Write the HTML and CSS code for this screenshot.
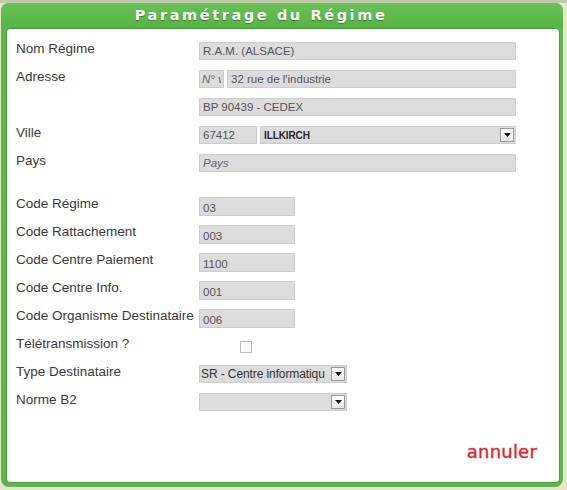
FILE: index.html
```html
<!DOCTYPE html>
<html lang="fr">

<head>
  <meta charset="utf-8" />
  <title>Paramétrage du Régime</title>
  <link rel="stylesheet" href="styles.css">
</head>

<body>
  <div class="dialog">
    <div class="dialog-title">Paramétrage du Régime</div>
    <div class="dialog-body">
      <form class="form">
        <div class="group">
          <div class="row">
            <label for="nom">Nom Régime</label>
            <input type="text" id="nom" class="field wide" value="R.A.M. (ALSACE)" readonly />
          </div>
          <div class="row">
            <label for="num">Adresse</label>
            <div class="pair">
              <input type="text" id="num" class="field num" placeholder="N° v" readonly />
              <input type="text" class="field street" value="32 rue de l'industrie" readonly />
            </div>
          </div>
          <div class="row">
            <label></label>
            <input type="text" class="field wide" value="BP 90439 - CEDEX" readonly />
          </div>
          <div class="row">
            <label for="cp">Ville</label>
            <div class="pair">
              <input type="text" id="cp" class="field cp" value="67412" readonly />
              <div class="select city">
                <span class="select-text strong">ILLKIRCH</span>
                <span class="select-btn"><svg width="7" height="4" viewBox="0 0 7 4"><path d="M0 0h7L3.5 4z" fill="#111" /></svg></span>
              </div>
            </div>
          </div>
          <div class="row">
            <label for="pays">Pays</label>
            <input type="text" id="pays" class="field wide" placeholder="Pays" readonly />
          </div>
        </div>

        <div class="group codes">
          <div class="row">
            <label for="c1">Code Régime</label>
            <input type="text" id="c1" class="field code" value="03" readonly />
          </div>
          <div class="row">
            <label for="c2">Code Rattachement</label>
            <input type="text" id="c2" class="field code" value="003" readonly />
          </div>
          <div class="row">
            <label for="c3">Code Centre Paiement</label>
            <input type="text" id="c3" class="field code" value="1100" readonly />
          </div>
          <div class="row">
            <label for="c4">Code Centre Info.</label>
            <input type="text" id="c4" class="field code" value="001" readonly />
          </div>
          <div class="row">
            <label for="c5">Code Organisme Destinataire</label>
            <input type="text" id="c5" class="field code" value="006" readonly />
          </div>
          <div class="row">
            <label for="tele">Télétransmission ?</label>
            <span class="check" id="tele"></span>
          </div>
          <div class="row">
            <label>Type Destinataire</label>
            <div class="select small">
              <span class="select-text">SR - Centre informatiqu</span>
              <span class="select-btn"><svg width="7" height="4" viewBox="0 0 7 4"><path d="M0 0h7L3.5 4z" fill="#111" /></svg></span>
            </div>
          </div>
          <div class="row">
            <label>Norme B2</label>
            <div class="select small">
              <span class="select-text"></span>
              <span class="select-btn"><svg width="7" height="4" viewBox="0 0 7 4"><path d="M0 0h7L3.5 4z" fill="#111" /></svg></span>
            </div>
          </div>
        </div>
      </form>

      <div class="actions">
        <a class="cancel" href="#">annuler</a>
      </div>
    </div>
  </div>
</body>

</html>
```

FILE: styles.css
```css
body {
  margin: 0;
  font-family: "Liberation Sans", Arial, sans-serif;
  background: linear-gradient(#bfcaa8 0, #bfcaa8 3px, #ece3cf 3px);
  height: 490px;
  overflow: hidden;
}

.dialog {
  width: 562px;
  height: 484px;
  margin: 3px 0 0 1px;
  box-sizing: border-box;
  padding: 0 3px 4px 5px;
  background: #5cb849;
  border-radius: 8px;
  display: flex;
  flex-direction: column;
}

.dialog-title {
  height: 25px;
  line-height: 25px;
  padding-right: 42px;
  text-align: center;
  font-family: "DejaVu Sans", Verdana, sans-serif;
  font-weight: bold;
  font-size: 14.5px;
  letter-spacing: 2.6px;
  color: #fff;
  text-shadow: 0 1px 1px rgba(0, 0, 0, 0.35);
  background: linear-gradient(#69c156, #56b343);
  border-radius: 8px 8px 0 0;
  margin: 0 -3px 0 -5px;
}

.dialog-body {
  flex: 1;
  background: #fff;
  border: 1px solid #4a9b3b;
  border-radius: 4px;
  padding: 13px 9px 0;
  display: flex;
  flex-direction: column;
}

.group.codes {
  margin-top: 15px;
}

.row {
  display: flex;
  height: 28px;
}

.row label {
  width: 183px;
  flex: none;
  font-size: 13.5px;
  line-height: 14px;
  color: #3a3a3a;
}

.pair {
  display: flex;
  gap: 3px;
}

.field {
  box-sizing: border-box;
  height: 18px;
  margin: 0;
  padding: 0 3px;
  border: 1px solid #cdcdcd;
  background: #dcdcdc;
  font-family: "Liberation Sans", Arial, sans-serif;
  font-size: 11.5px;
  color: #555;
  outline: none;
}

.field::placeholder {
  color: #666;
  font-style: italic;
}

.wide {
  width: 317px;
}

.num {
  width: 25px;
  padding: 0 2px;
}

.street {
  width: 289px;
}

.cp {
  width: 58px;
}

.code {
  width: 96px;
  height: 19px;
  padding-top: 3px;
}

.check {
  box-sizing: border-box;
  width: 12px;
  height: 12px;
  margin: 4px 0 0 41px;
  border: 1px solid #b9b9b9;
  background: #fafafa;
}

.select {
  box-sizing: border-box;
  height: 18px;
  display: flex;
  align-items: center;
  border: 1px solid #cdcdcd;
  background: #dcdcdc;
}

.city {
  width: 256px;
}

.small {
  width: 148px;
}

.select-text {
  flex: 1;
  white-space: nowrap;
  padding-left: 1px;
  font-size: 12px;
  letter-spacing: -0.1px;
  color: #333;
}

.strong {
  padding-left: 3px;
  font-size: 10px;
  font-weight: bold;
  color: #2a2230;
}

.select-btn {
  box-sizing: border-box;
  flex: none;
  width: 14px;
  height: 14px;
  margin-right: 1px;
  display: flex;
  align-items: center;
  justify-content: center;
  border: 1px solid #9a9a9a;
  background: linear-gradient(#fff, #e6e6e6);
}

.actions {
  display: flex;
  justify-content: flex-end;
  padding: 20px 13px 0 0;
}

.cancel {
  font-family: "DejaVu Sans", sans-serif;
  font-size: 18px;
  letter-spacing: 0.2px;
  color: #e3262d;
  -webkit-text-stroke: 0.4px #e3262d;
  text-decoration: none;
}
```
